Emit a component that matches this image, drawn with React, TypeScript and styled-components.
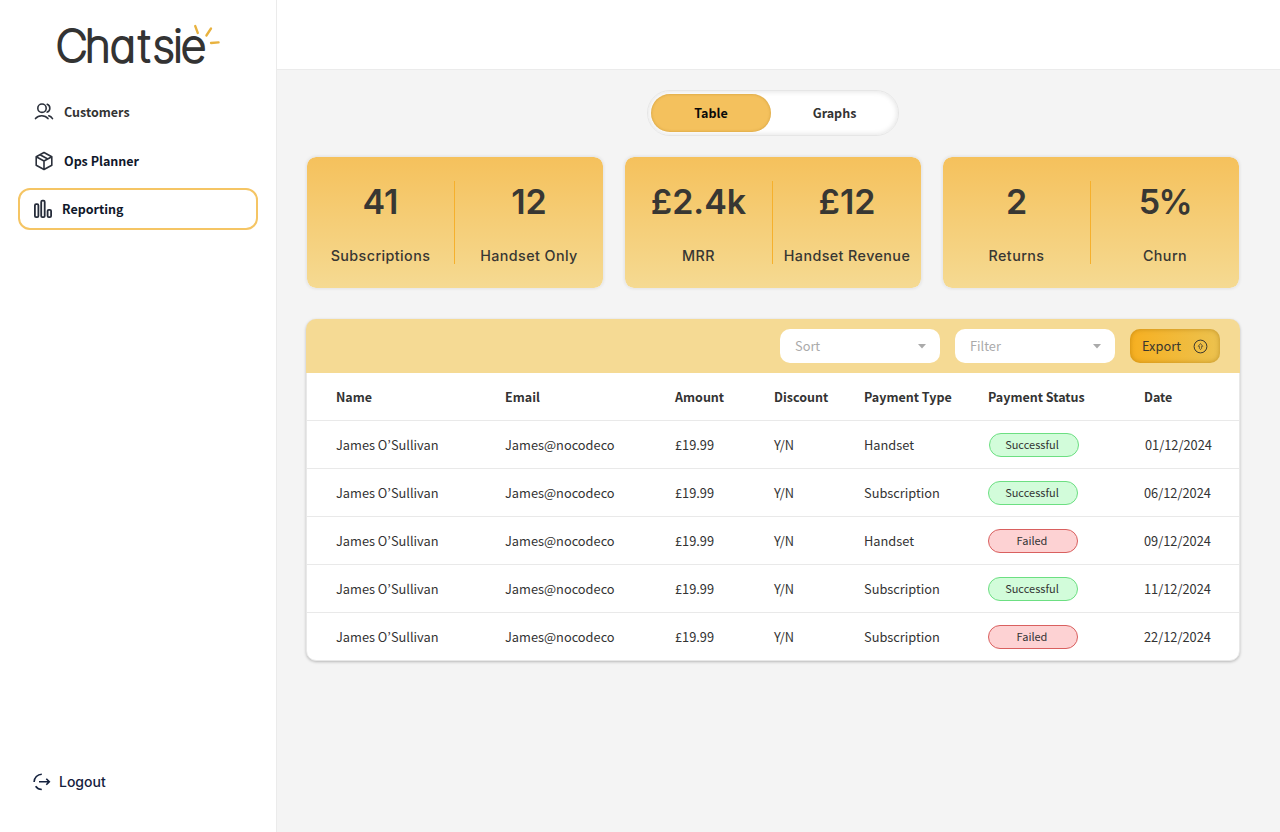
import React from "react";
import styled, { createGlobalStyle, css } from "styled-components";

const sans = `"Noto Sans CJK JP", "Noto Sans", sans-serif`;

const GlobalStyle = createGlobalStyle`
  * { box-sizing: border-box; }
  body { margin: 0; background: #f4f4f4; font-family: ${sans}; color: #333; }
`;

const Page = styled.div`
  display: flex;
  height: 832px;
  width: 1280px;
  overflow: hidden;
`;

const Sidebar = styled.aside`
  display: flex;
  flex-direction: column;
  width: 277px;
  padding: 0 18px;
  background: #fff;
  border-right: 1px solid #ebebeb;
`;

const Logo = styled.svg`
  flex: none;
  width: 180px;
  height: 70px;
  margin: 10px 0 11px 36px;
  font-family: Inter, sans-serif;
  font-size: 44.5px;
  font-weight: 200;
  font-feature-settings: "cv11";
`;

const NavItem = styled.a<{ $active?: boolean; $ink?: string }>`
  display: flex;
  align-items: center;
  height: 42px;
  margin-bottom: 7px;
  padding-left: 16px;
  gap: 10px;
  border-radius: 12px;
  font-size: 12.5px;
  font-weight: 700;
  color: ${(p) => p.$ink || "#0f172a"};
  ${(p) =>
    p.$active &&
    css`
      margin-top: -1px;
      padding-left: 14px;
      gap: 9px;
      border: 2px solid #f5c564;
    `}
`;

const Label = styled.span`
  padding-bottom: 2px;
`;

const Logout = styled.a`
  display: flex;
  align-items: center;
  gap: 8px;
  height: 24px;
  margin: auto 0 38px 15px;
  font-family: Inter, sans-serif;
  font-size: 14px;
  font-weight: 500;
  color: #14213d;
`;

const Content = styled.div`
  flex: 1;
`;

const TopBar = styled.header`
  height: 70px;
  background: #fff;
  border-bottom: 1px solid #ebebeb;
`;

const Main = styled.main`
  display: flex;
  flex-direction: column;
  padding: 20px 40px 0 29px;
`;

const Toggle = styled.div`
  display: flex;
  align-self: center;
  width: 252px;
  height: 46px;
  padding: 3px 0 3px 3px;
  border: 1px solid #e6e6e6;
  border-radius: 23px;
  background: #fff;
  box-shadow: inset 0 0 5px 1px rgba(0, 0, 0, 0.1);
`;

const ToggleOption = styled.button<{ $active?: boolean }>`
  flex: none;
  width: ${(p) => (p.$active ? 120 : 127)}px;
  height: 38px;
  padding: 0 0 2px;
  border: 0;
  border-radius: 19px;
  background: ${(p) => (p.$active ? "#f4c15d" : "transparent")};
  box-shadow: ${(p) => (p.$active ? "inset 0 0 3px rgba(150, 100, 0, 0.4)" : "none")};
  font: 700 12.5px ${sans};
  color: ${(p) => (p.$active ? "#0a0a0a" : "#333")};
`;

const Cards = styled.section`
  display: flex;
  gap: 20px;
  margin-top: 20px;
`;

const Card = styled.div`
  display: flex;
  align-items: center;
  width: 298px;
  height: 133px;
  border: 1px solid #e9e9e9;
  border-radius: 10px;
  background: linear-gradient(#f5c15c, #f5da92) padding-box;
  box-shadow: 0 0 3px rgba(0, 0, 0, 0.08);
`;

const Metric = styled.div`
  display: flex;
  flex-direction: column;
  align-items: center;
  width: 148px;
  height: 83px;
  font-family: Inter, sans-serif;
  color: #383733;
  white-space: nowrap;
  &:first-child { border-right: 1px solid #f6b02c; }
`;

const MetricValue = styled.span<{ $tight?: boolean }>`
  font-size: 34px;
  line-height: 42px;
  font-weight: 600;
  letter-spacing: ${(p) => (p.$tight ? -1.5 : 0)}px;
`;

const MetricLabel = styled.span`
  margin-top: 23px;
  font-size: 14.3px;
  line-height: 20px;
  font-weight: 500;
  letter-spacing: 0.42px;
`;

const Panel = styled.section`
  margin-top: 30px;
  border: 1px solid #e8e8e8;
  border-radius: 10px;
  background: #fff;
  box-shadow: 0 1px 3px rgba(0, 0, 0, 0.25);
`;

const PanelBar = styled.div`
  display: flex;
  justify-content: flex-end;
  align-items: center;
  gap: 15px;
  height: 54px;
  margin: -1px -1px 0;
  padding-right: 20px;
  border-radius: 10px 10px 0 0;
  background: #f5da94;
`;

const Select = styled.div`
  display: flex;
  align-items: center;
  justify-content: space-between;
  width: 160px;
  height: 34px;
  padding: 0 14px 0 15px;
  border-radius: 10px;
  background: #fff;
  font-size: 12.8px;
  color: #aaa;
`;

const ExportButton = styled.button`
  display: flex;
  align-items: center;
  justify-content: space-between;
  width: 90px;
  height: 34px;
  padding: 0 12px;
  border: 0;
  border-radius: 10px;
  background: linear-gradient(90deg, #f7b021, #ecc24f);
  box-shadow: inset 0 0 5px rgba(150, 100, 0, 0.5);
  font: 400 12.8px ${sans};
  color: #3a372f;
`;

const Row = styled.div<{ $head?: boolean; $shift?: boolean }>`
  display: grid;
  grid-template-columns: 169px 170px 99px 90px ${(p) => (p.$shift ? 125 : 124)}px 156px 1fr;
  align-items: center;
  height: 48px;
  padding-left: 29px;
  border-bottom: 1px solid #e9e9e9;
  font-size: ${(p) => (p.$head ? 12.5 : 12.8)}px;
  font-weight: ${(p) => (p.$head ? 700 : 400)};
  white-space: nowrap;
  &:last-child {
    height: 47px;
    border-bottom: 0;
  }
`;

const Badge = styled.span<{ $failed?: boolean; $shift?: boolean }>`
  display: block;
  width: 90px;
  height: 24px;
  padding-right: ${(p) => (p.$shift ? 4 : 2)}px;
  border: 1px solid ${(p) => (p.$failed ? "#d9605f" : "#6cdf82")};
  border-radius: 12px;
  background: ${(p) => (p.$failed ? "#fdd2d3" : "#d2fcda")};
  font-size: 11px;
  line-height: 21px;
  text-align: center;
`;

const columns = ["Name", "Email", "Amount", "Discount", "Payment Type", "Payment Status", "Date"];

const payments = [
  { type: "Handset", failed: false, date: "01/12/2024" },
  { type: "Subscription", failed: false, date: "06/12/2024" },
  { type: "Handset", failed: true, date: "09/12/2024" },
  { type: "Subscription", failed: false, date: "11/12/2024" },
  { type: "Subscription", failed: true, date: "22/12/2024" },
];

const cards = [
  [["41", "Subscriptions"], ["12", "Handset Only"]],
  [["£2.4k", "MRR"], ["£12", "Handset Revenue"]],
  [["2", "Returns"], ["5%", "Churn"]],
];

const UsersIcon = () => (
  <svg width="20" height="20" viewBox="0 0 20 20" fill="none" stroke="#2b303b" strokeWidth="1.600" strokeLinecap="round">
    <circle cx="8" cy="6.200" r="4.200" />
    <path d="M13.200 2.300a4.200 4.200 0 0 1 0 7.800M1.500 16.600C4.500 12.800 11 12.800 14 16.600M14.800 13.800c1.500.400 2.700 1.300 3.700 2.800" />
  </svg>
);

const PackageIcon = () => (
  <svg width="20" height="20" viewBox="0 0 20 20" fill="none" stroke="#2b303b" strokeWidth="1.600" strokeLinejoin="round">
    <path d="M10 1.500L17.800 5.700V14.300L10 18.500L2.200 14.300V5.700zM2.200 5.700L10 10L17.800 5.700M10 10V18.500M6 3.700L13.800 8" />
  </svg>
);

const BarsIcon = () => (
  <svg width="19" height="20" viewBox="0 0 19 20" fill="none" stroke="#262c3a" strokeWidth="1.800">
    <rect x=".9" y="5.200" width="3.500" height="13" rx="1.200" />
    <rect x="7.200" y="1.700" width="3.500" height="16.500" rx="1.200" />
    <rect x="13.600" y="10.800" width="3.500" height="7.400" rx="1.200" />
  </svg>
);

const LogoutIcon = () => (
  <svg width="18" height="18" viewBox="0 0 18 18" fill="none" stroke="#14213d" strokeWidth="1.600">
    <path d="M8.800 1.200a7.800 7.800 0 0 0-7.700 7.800M2.600 13.200a7.800 7.800 0 0 0 6.200 3.300M6 8.800h10.300M13.300 5.800l3 3-3 3" />
  </svg>
);

const ExportIcon = () => (
  <svg width="15" height="15" viewBox="0 0 15 15" fill="none" stroke="#3a372f" strokeWidth="1">
    <circle cx="7.500" cy="7.500" r="6.400" />
    <path d="M7.500 4.500L5.200 7.300h1.200v2L7.500 10.600l1.100-1.300v-2h1.200z" strokeWidth=".7" />
  </svg>
);

const Caret = () => (
  <svg width="8" height="5" viewBox="0 0 8 5">
    <path d="M0 0h8L4 4.500z" fill="#aaa" />
  </svg>
);

export default function App() {
  return (
    <>
      <GlobalStyle />
      <Page>
        <Sidebar>
          <Logo viewBox="0 -10 180 70">
            <text x="1.500 30.800 55.800 84.300 98.500 119 126.800" y="42" fill="#333" stroke="#333" strokeWidth="2" strokeLinejoin="round">
              Chatsie
            </text>
            <path d="M141.200 6l2.600 7M157 8.500l-4.600 7M157 23l7.600-.6" fill="none" stroke="#e8b23f" strokeWidth="2.300" strokeLinecap="round" />
          </Logo>
          <NavItem $ink="#333"><UsersIcon /><Label>Customers</Label></NavItem>
          <NavItem><PackageIcon /><Label>Ops Planner</Label></NavItem>
          <NavItem $active><BarsIcon /><Label>Reporting</Label></NavItem>
          <Logout><LogoutIcon /><Label>Logout</Label></Logout>
        </Sidebar>
        <Content>
          <TopBar />
          <Main>
            <Toggle>
              <ToggleOption $active>Table</ToggleOption>
              <ToggleOption>Graphs</ToggleOption>
            </Toggle>
            <Cards>
              {cards.map((metrics) => (
                <Card key={metrics[0][1]}>
                  {metrics.map(([value, label]) => (
                    <Metric key={label}>
                      <MetricValue $tight={value === "5%"}>{value}</MetricValue>
                      <MetricLabel>{label}</MetricLabel>
                    </Metric>
                  ))}
                </Card>
              ))}
            </Cards>
            <Panel>
              <PanelBar>
                <Select><Label>Sort</Label><Caret /></Select>
                <Select><Label>Filter</Label><Caret /></Select>
                <ExportButton><Label>Export</Label><ExportIcon /></ExportButton>
              </PanelBar>
              <Row $head>{columns.map((c) => <span key={c}>{c}</span>)}</Row>
              {payments.map((p, i) => (
                <Row key={p.date} $shift={i === 0}>
                  <span>James O’Sullivan</span>
                  <span>James@nocodeco</span>
                  <span>£19.99</span>
                  <span>Y/N</span>
                  <span>{p.type}</span>
                  <Badge $failed={p.failed} $shift={i === 0}>{p.failed ? "Failed" : "Successful"}</Badge>
                  <span>{p.date}</span>
                </Row>
              ))}
            </Panel>
          </Main>
        </Content>
      </Page>
    </>
  );
}
